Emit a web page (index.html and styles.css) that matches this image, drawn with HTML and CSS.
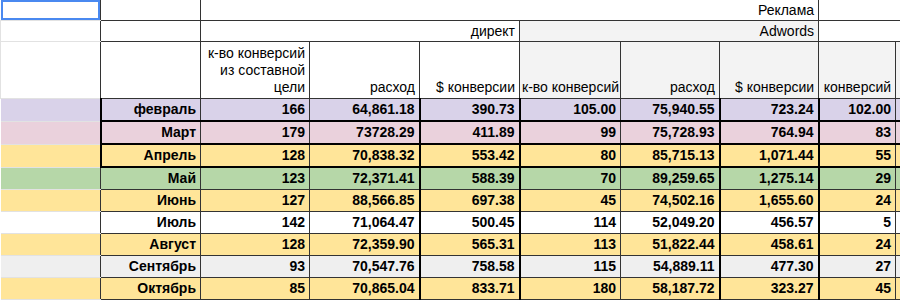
FILE: index.html
```html
<!DOCTYPE html>
<html lang="ru">
<head>
<meta charset="utf-8">
<title>Реклама</title>
<link rel="stylesheet" href="styles.css">
</head>
<body>
<table class="sheet">
  <colgroup>
    <col class="w-a"><col class="w-b"><col class="w-c"><col class="w-d"><col class="w-e">
    <col class="w-f"><col class="w-g"><col class="w-h"><col class="w-i"><col class="w-j">
  </colgroup>
  <thead>
    <tr class="r1">
      <td class="a sel"></td>
      <td class="hb"></td>
      <td colspan="6">Реклама</td>
      <td colspan="2"></td>
    </tr>
    <tr class="r2">
      <td class="a"></td>
      <td class="hb"></td>
      <td colspan="3">директ</td>
      <td colspan="3" class="shade">Adwords</td>
      <td colspan="2"></td>
    </tr>
    <tr class="r3">
      <td class="a"></td>
      <td class="hb"></td>
      <td class="multi">к-во конверсий<br>из составной<br>цели</td>
      <td>расход</td>
      <td>$ конверсии</td>
      <td class="shade tight">к-во конверсий</td>
      <td class="shade">расход</td>
      <td class="shade">$ конверсии</td>
      <td class="shade">конверсий</td>
      <td class="shade"></td>
    </tr>
  </thead>
  <tbody class="data">
    <tr class="lav box first"><td></td><td>февраль</td><td>166</td><td>64,861.18</td><td>390.73</td><td>105.00</td><td>75,940.55</td><td>723.24</td><td>102.00</td><td></td></tr>
    <tr class="pink box"><td></td><td>Март</td><td>179</td><td>73728.29</td><td>411.89</td><td>99</td><td>75,728.93</td><td>764.94</td><td>83</td><td></td></tr>
    <tr class="yel box last"><td></td><td>Апрель</td><td>128</td><td>70,838.32</td><td>553.42</td><td>80</td><td>85,715.13</td><td>1,071.44</td><td>55</td><td></td></tr>
    <tr class="grn"><td></td><td>Май</td><td>123</td><td>72,371.41</td><td>588.39</td><td>70</td><td>89,259.65</td><td>1,275.14</td><td>29</td><td></td></tr>
    <tr class="yel"><td></td><td>Июнь</td><td>127</td><td>88,566.85</td><td>697.38</td><td>45</td><td>74,502.16</td><td>1,655.60</td><td>24</td><td></td></tr>
    <tr class="wht"><td></td><td>Июль</td><td>142</td><td>71,064.47</td><td>500.45</td><td>114</td><td>52,049.20</td><td>456.57</td><td>5</td><td></td></tr>
    <tr class="yel"><td></td><td>Август</td><td>128</td><td>72,359.90</td><td>565.31</td><td>113</td><td>51,822.44</td><td>458.61</td><td>24</td><td></td></tr>
    <tr class="gry"><td></td><td>Сентябрь</td><td>93</td><td>70,547.76</td><td>758.58</td><td>115</td><td>54,889.11</td><td>477.30</td><td>27</td><td></td></tr>
    <tr class="yel"><td></td><td>Октябрь</td><td>85</td><td>70,865.04</td><td>833.71</td><td>180</td><td>58,187.72</td><td>323.27</td><td>45</td><td></td></tr>
    <tr class="yel next"><td></td><td></td><td></td><td></td><td></td><td></td><td></td><td></td><td></td><td></td></tr>
  </tbody>
</table>
</body>
</html>
```
FILE: styles.css
```css
html, body {
  margin: 0;
  padding: 0;
  background: #ffffff;
  overflow: hidden;
}

body {
  font-family: "Liberation Sans", Arial, sans-serif;
  font-size: 14px;
  color: #000000;
}

.sheet {
  border-collapse: collapse;
  table-layout: fixed;
  width: 900px;
}

.w-a { width: 100px; }
.w-b { width: 100px; }
.w-c { width: 109px; }
.w-d { width: 110px; }
.w-e { width: 100px; }
.w-f { width: 101px; }
.w-g { width: 99px; }
.w-h { width: 99px; }
.w-i { width: 77px; }
.w-j { width: 5px; }

.sheet td {
  padding: 0 4px 0 2px;
  text-align: right;
  white-space: nowrap;
  overflow: hidden;
  border: 1px solid #333333;
  line-height: 17px;
}

/* header */
.r1 td {
  height: 20px;
  border-top: none;
  vertical-align: middle;
}
.r2 td {
  height: 20px;
  vertical-align: middle;
}
.r3 td {
  height: 54px;
  vertical-align: bottom;
  padding-bottom: 2px;
}

.sheet .a {
  border-color: #e2e2e2;
  border-right: 1px solid #333333;
}
.sheet .sel {
  box-shadow: inset 0 0 0 2px #4a89f0;
  border-left: none;
}
.shade {
  background: #f3f3f3;
}
.sheet .tight {
  padding-right: 3px;
  overflow: visible;
}

/* data rows */
.data td {
  height: 21px;
  font-weight: bold;
  vertical-align: middle;
  border: 1px solid #333333;
}
.data td:nth-child(1) {
  border-top-color: #e2e2e2;
  border-bottom-color: #e2e2e2;
  border-left: none;
}
.data td:nth-child(5),
.data td:nth-child(6),
.data td:nth-child(8),
.data td:nth-child(9) {
  border-left: 2px solid #000000;
}
.data td:nth-child(7),
.data td:nth-child(10) {
  border-left-color: #8a8a8a;
}

.data .box td {
  border-bottom: 2px solid #000000;
}
.data .box td:nth-child(1) {
  border-bottom: 1px solid #e2e2e2;
  border-right: 2px solid #000000;
}
.data .box td:nth-child(7) {
  border-left-color: #555555;
}

.data .next td {
  height: 1px;
  border-bottom: none;
}

.lav td { background: #d9d2e9; }
.pink td { background: #ead1dc; }
.yel td { background: #ffe599; }
.grn td { background: #b6d7a8; }
.wht td { background: #ffffff; }
.gry td { background: #efefef; }
.next td:nth-child(1) { background: #f9cb9c; }
```
